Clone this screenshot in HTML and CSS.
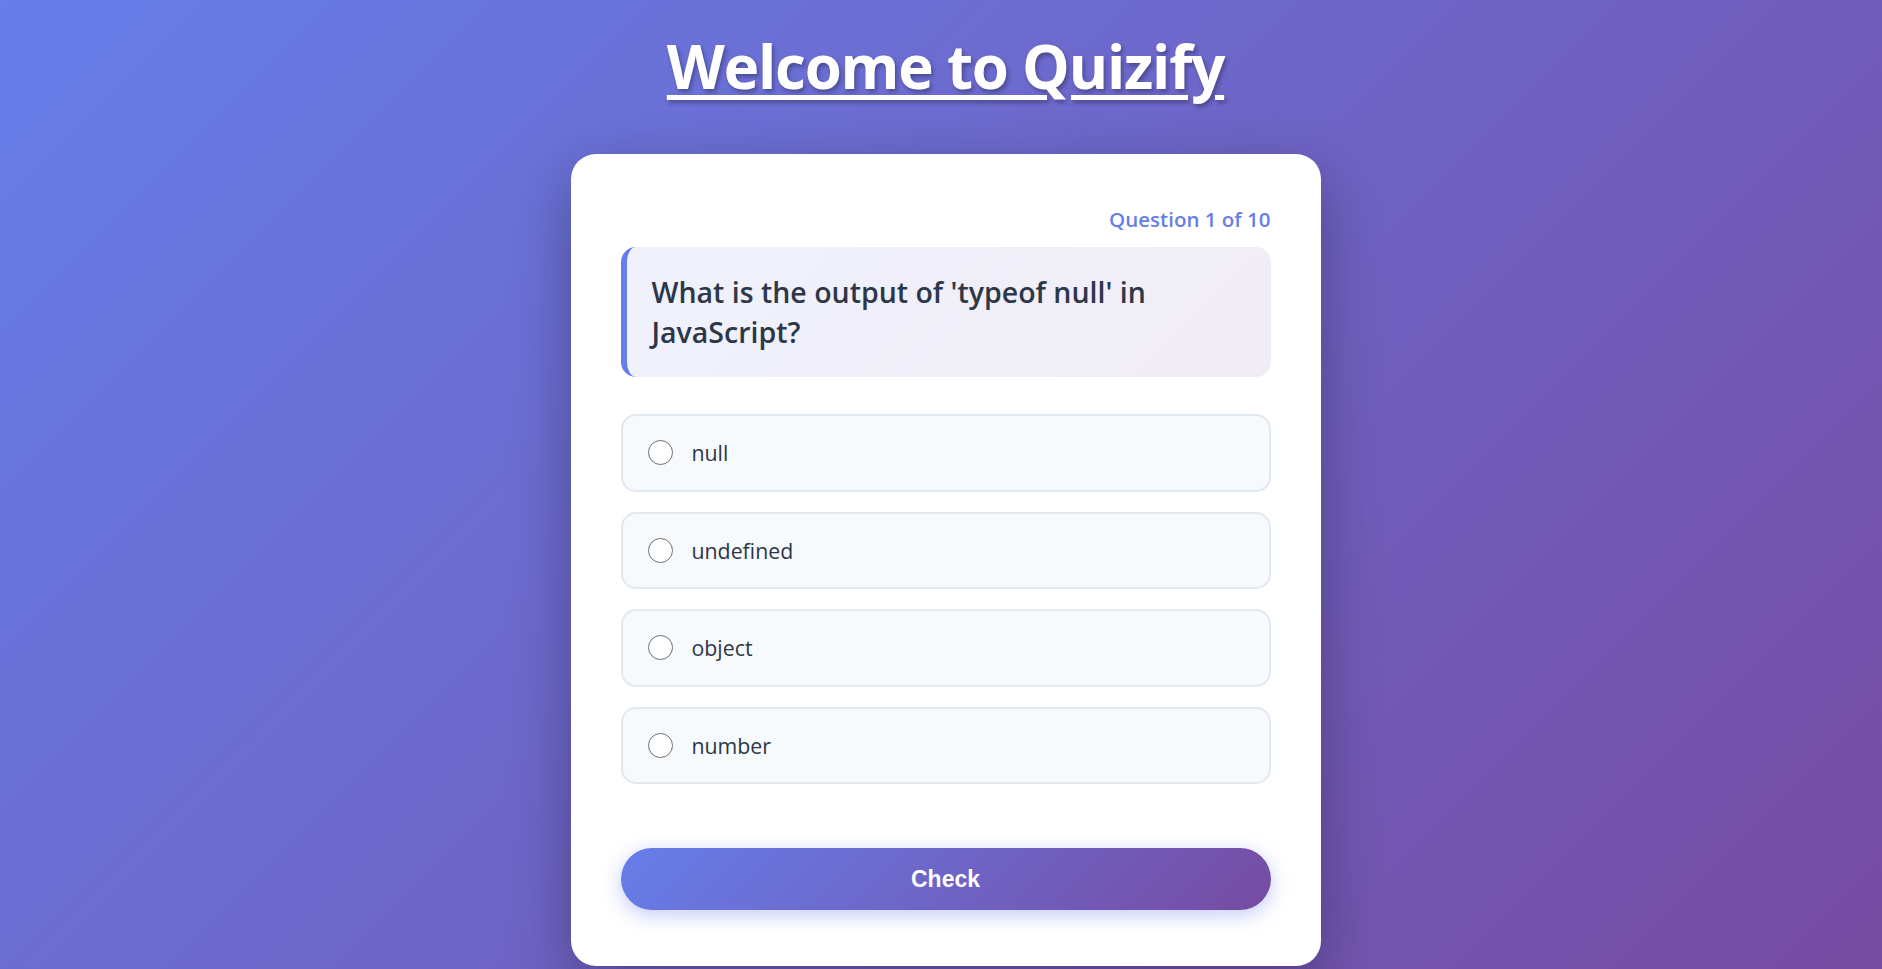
FILE: index.html
```html
<!DOCTYPE html>
<html lang="en">
<head>
<meta charset="utf-8">
<title>Quizify</title>
<link rel="stylesheet" href="styles.css">
</head>
<body>
  <h1 class="title">Welcome to Quizify</h1>
  <main class="card">
    <div class="progress">Question 1 of 10</div>
    <div class="question">What is the output of 'typeof null' in JavaScript?</div>
    <div class="options">
      <label class="option"><span class="radio"></span><span class="option-text">null</span></label>
      <label class="option"><span class="radio"></span><span class="option-text">undefined</span></label>
      <label class="option"><span class="radio"></span><span class="option-text">object</span></label>
      <label class="option"><span class="radio"></span><span class="option-text">number</span></label>
    </div>
    <button class="check-btn" type="button">Check</button>
  </main>
</body>
</html>
```

FILE: styles.css
```css
* { box-sizing: border-box; }

html, body { height: 100%; }

body {
  margin: 0;
  padding: 28px 0 0 9px;
  min-height: 100vh;
  font-family: "Open Sans", "Noto Sans", sans-serif;
  background: linear-gradient(135deg, #667eea 0%, #764ba2 100%);
  overflow: hidden;
  display: flex;
  flex-direction: column;
  align-items: center;
}

.title {
  margin: 0 0 50px;
  font-size: 60px;
  line-height: 76px;
  font-weight: 700;
  letter-spacing: -1.2px;
  color: #ffffff;
  text-decoration: underline;
  text-decoration-thickness: 5px;
  text-underline-offset: 6px;
  text-shadow: 2px 3px 4px rgba(0, 0, 0, 0.3);
}

.card {
  width: 750px;
  background: #ffffff;
  border-radius: 25px;
  padding: 50px 50px 56px;
  box-shadow: 0 20px 60px rgba(0, 0, 0, 0.3);
}

.progress {
  text-align: right;
  color: #667eea;
  font-weight: 600;
  font-size: 20.5px;
  line-height: 30px;
  margin-bottom: 13px;
}

.question {
  background: linear-gradient(135deg, rgba(102, 126, 234, 0.1), rgba(118, 75, 162, 0.1));
  border-left: 6px solid #667eea;
  border-radius: 15px;
  padding: 25px;
  font-size: 28.5px;
  line-height: 40px;
  font-weight: 600;
  color: #2d3748;
  margin-bottom: 37px;
}

.options {
  display: flex;
  flex-direction: column;
  gap: 20px;
}

.option {
  display: flex;
  align-items: center;
  height: 77.5px;
  padding: 0 25px;
  background: #f7fafc;
  border: 2px solid #e2e8f0;
  border-radius: 15px;
  font-size: 21.3px;
  color: #2d3748;
}

.radio {
  width: 25px;
  height: 25px;
  border: 1.5px solid #6f6f6f;
  border-radius: 50%;
  background: #ffffff;
  margin-right: 19px;
  flex: none;
}

.check-btn {
  display: block;
  width: 100%;
  height: 62px;
  margin-top: 64px;
  border: none;
  border-radius: 31px;
  background: linear-gradient(135deg, #667eea 0%, #764ba2 100%);
  color: #ffffff;
  font-family: "Liberation Sans", Arial, sans-serif;
  font-weight: 700;
  font-size: 23px;
  box-shadow: 0 5px 20px rgba(102, 126, 234, 0.4);
}
```
